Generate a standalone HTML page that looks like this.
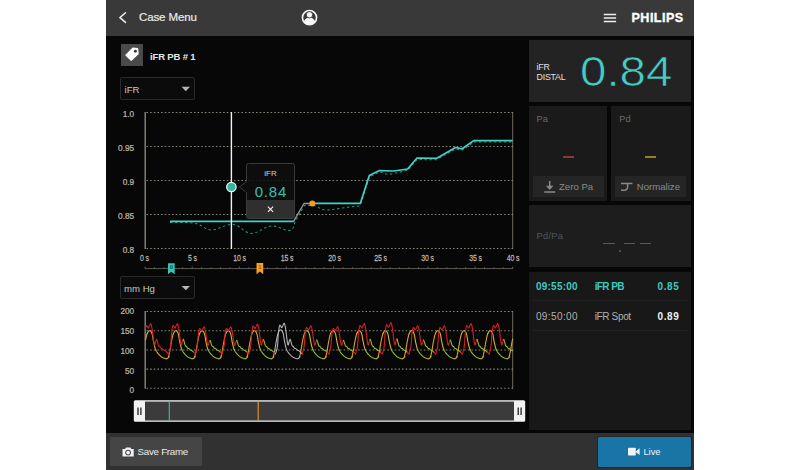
<!DOCTYPE html>
<html lang="en">
<head>
<meta charset="utf-8">
<title>iFR Pullback</title>
<style>
html,body{margin:0;padding:0;}
body{width:800px;height:470px;overflow:hidden;background:#fff;position:relative;font-family:"Liberation Sans",sans-serif;color:#e6e6e6;}
.abs{position:absolute;}
#app{left:106px;top:0;width:588px;height:470px;background:#070707;}
#hdr{left:106px;top:0;width:588px;height:36px;background:#393939;}
#ftr{left:106px;top:433px;width:588px;height:37px;background:#313131;}
.t{position:absolute;white-space:nowrap;line-height:1;}
.card{position:absolute;background:#222;}
.dd{position:absolute;box-sizing:border-box;border:1px solid #2a2a2a;border-radius:2px;background:#0b0b0b;}
svg{position:absolute;left:0;top:0;overflow:visible;}
.ax text{font-family:"Liberation Sans",sans-serif;font-size:9.2px;fill:#bdb6a8;stroke:#bdb6a8;stroke-width:0.25px;}
.xs text{word-spacing:-0.5px;font-size:9.1px;}
</style>
</head>
<body>
<div id="app" class="abs"></div>
<div id="hdr" class="abs"></div>
<div id="ftr" class="abs"></div>

<!-- header -->
<div class="t" style="left:139px;top:11.9px;font-size:11.5px;color:#eaeaea;letter-spacing:-0.12px;-webkit-text-stroke:0.2px #eaeaea;">Case Menu</div>
<div class="t" style="left:631.5px;top:12px;font-size:12.6px;font-weight:bold;color:#fff;letter-spacing:0.45px;-webkit-text-stroke:0.35px #fff;">PHILIPS</div>

<!-- title row -->
<div class="abs" style="left:121px;top:44px;width:21.5px;height:21.5px;background:#4a4a4a;"></div>
<div class="t" style="left:150px;top:52.3px;font-size:9.5px;font-weight:bold;color:#e8e8e8;letter-spacing:-0.15px;">iFR PB # 1</div>

<!-- dropdowns -->
<div class="dd" style="left:120px;top:77px;width:75px;height:23px;"></div>
<div class="t" style="left:124.5px;top:84.8px;font-size:9.6px;color:#c6c6c6;">iFR</div>
<div class="dd" style="left:120px;top:276px;width:75px;height:23px;"></div>
<div class="t" style="left:124px;top:283.8px;font-size:9.6px;color:#c6c6c6;">mm Hg</div>

<!-- right cards -->
<div class="card" style="left:528.7px;top:39.8px;width:162px;height:62px;background:#232323;"></div>
<div class="t" style="left:536.5px;top:62.7px;font-size:8.8px;color:#e0e0e0;letter-spacing:-0.2px;">iFR</div>
<div class="t" style="left:536.5px;top:72.8px;font-size:8.8px;color:#e0e0e0;letter-spacing:-0.2px;">DISTAL</div>
<div class="t" id="big" style="left:580px;top:51.2px;font-size:42.4px;color:#45cdc3;transform-origin:0 0;transform:scaleX(1.12);-webkit-text-stroke:0.7px #232323;">0.84</div>

<div class="card" style="left:528.7px;top:105.8px;width:78.8px;height:95px;background:#1a1a1a;"></div>
<div class="card" style="left:611.3px;top:105.8px;width:79.4px;height:95px;background:#1a1a1a;"></div>
<div class="t" style="left:536.5px;top:114.8px;font-size:9.2px;color:#6a6a6a;">Pa</div>
<div class="t" style="left:619.3px;top:114.8px;font-size:9.2px;color:#6a6a6a;">Pd</div>
<div class="abs" style="left:562.5px;top:156.3px;width:11px;height:1.6px;background:#8c3838;"></div>
<div class="abs" style="left:644.8px;top:156.3px;width:11.3px;height:1.6px;background:#94802a;"></div>
<div class="abs" style="left:532.6px;top:176px;width:71.3px;height:21.2px;background:#252525;"></div>
<div class="abs" style="left:614.7px;top:176px;width:71.3px;height:21.2px;background:#252525;"></div>
<div class="t" style="left:559px;top:181.8px;font-size:9.6px;color:#8a8a8a;">Zero Pa</div>
<div class="t" style="left:636.8px;top:181.8px;font-size:9.6px;color:#8a8a8a;">Normalize</div>

<div class="card" style="left:528.7px;top:205.2px;width:162px;height:62.2px;background:#1d1d1d;"></div>
<div class="t" style="left:536.5px;top:231.8px;font-size:9.2px;color:#555;letter-spacing:0.35px;">Pd/Pa</div>
<div class="abs" style="left:603.2px;top:242.9px;width:11.5px;height:1.4px;background:#5a5a5a;"></div>
<div class="abs" style="left:623.9px;top:242.9px;width:11.2px;height:1.4px;background:#5a5a5a;"></div>
<div class="abs" style="left:639.5px;top:242.9px;width:11.5px;height:1.4px;background:#5a5a5a;"></div>
<div class="abs" style="left:619px;top:250.2px;width:2px;height:2px;border-radius:1px;background:#5a5a5a;"></div>

<div class="card" style="left:528.7px;top:271.8px;width:162px;height:158.6px;background:#181818;"></div>
<div class="abs" style="left:532.6px;top:300.3px;width:154.8px;height:1px;background:#222;"></div>
<div class="abs" style="left:532.6px;top:330px;width:154.8px;height:1px;background:#222;"></div>
<div class="t" style="left:535.9px;top:281.7px;font-size:10px;font-weight:bold;color:#3ec9c1;letter-spacing:0.25px;">09:55:00</div>
<div class="t" style="left:594.7px;top:281.7px;font-size:10px;font-weight:bold;color:#3ec9c1;letter-spacing:-0.6px;">iFR PB</div>
<div class="t" style="left:657.6px;top:281.7px;font-size:10px;font-weight:bold;color:#3ec9c1;letter-spacing:0.55px;">0.85</div>
<div class="t" style="left:535.9px;top:311.6px;font-size:10px;color:#b0b0b0;letter-spacing:0.4px;">09:50:00</div>
<div class="t" style="left:594.7px;top:311.6px;font-size:10px;color:#b0b0b0;letter-spacing:-0.35px;">iFR Spot</div>
<div class="t" style="left:657.6px;top:311.6px;font-size:10px;font-weight:bold;color:#f0f0f0;letter-spacing:0.55px;">0.89</div>

<!-- footer buttons -->
<div class="abs" style="left:109.7px;top:437px;width:92px;height:28.7px;background:#454545;"></div>
<div class="t" style="left:137.6px;top:446.9px;font-size:9.8px;color:#eaeaea;letter-spacing:-0.3px;">Save Frame</div>
<div class="abs" style="left:598.2px;top:436.8px;width:92.4px;height:29.8px;background:#1a75a7;border-radius:1.5px;box-shadow:0 0 0 1px #262626;"></div>
<div class="t" style="left:643.4px;top:447px;font-size:9.4px;color:#f2f2f2;">Live</div>

<svg width="800" height="470" viewBox="0 0 800 470">
  <!-- header icons -->
  <path d="M125.5 12.8L119.9 17.6L125.5 22.4" stroke="#f0f0f0" stroke-width="1.5" fill="none" stroke-linecap="round" stroke-linejoin="round"/>
  <g>
    <clipPath id="uc"><circle cx="309.5" cy="17.6" r="7.3"/></clipPath>
    <circle cx="309.5" cy="17.6" r="7.1" fill="none" stroke="#f6f6f6" stroke-width="1.6"/>
    <ellipse cx="309.5" cy="25.4" rx="6.6" ry="8" fill="#f6f6f6" clip-path="url(#uc)"/>
    <circle cx="309.5" cy="14.8" r="3.2" fill="#f6f6f6" stroke="#393939" stroke-width="0.9"/>
  </g>
  <path d="M603.8 14.6h12.3M603.8 18h12.3M603.8 21.4h12.3" stroke="#f0f0f0" stroke-width="1.5" fill="none"/>
  <!-- tag icon -->
  <path d="M137.6 48.6l.5 5.3-6.9 6.5-5.3-5.3 6.9-6.9z" fill="#fff" stroke="#fff" stroke-width="1.2" stroke-linejoin="round"/>
  <circle cx="135.4" cy="51.2" r="1.45" fill="#333"/>
  <!-- dropdown arrows -->
  <path d="M181.6 86.8h8.4l-4.2 4.4z" fill="#b6b6b6"/>
  <path d="M181.6 285.9h8.4l-4.2 4.4z" fill="#b6b6b6"/>

  <!-- chart 1 -->
  <g class="ax">
    <text transform="translate(134.2 117.2) scale(0.90 1)" text-anchor="end">1.0</text>
<text transform="translate(134.2 151.2) scale(0.90 1)" text-anchor="end">0.95</text>
<text transform="translate(134.2 185.2) scale(0.90 1)" text-anchor="end">0.9</text>
<text transform="translate(134.2 219.2) scale(0.90 1)" text-anchor="end">0.85</text>
<text transform="translate(134.2 253.2) scale(0.90 1)" text-anchor="end">0.8</text>
    <text transform="translate(134.2 314.4) scale(0.90 1)" text-anchor="end">200</text>
<text transform="translate(134.2 334.1) scale(0.90 1)" text-anchor="end">150</text>
<text transform="translate(134.2 353.8) scale(0.90 1)" text-anchor="end">100</text>
<text transform="translate(134.2 373.5) scale(0.90 1)" text-anchor="end">50</text>
<text transform="translate(134.2 393.2) scale(0.90 1)" text-anchor="end">0</text>
  </g>
  <g class="ax xs">
    <text transform="translate(144.5 260.6) scale(0.76 1)" text-anchor="middle">0 s</text>
<text transform="translate(192.5 260.6) scale(0.76 1)" text-anchor="middle">5 s</text>
<text transform="translate(239.5 260.6) scale(0.76 1)" text-anchor="middle">10 s</text>
<text transform="translate(287.0 260.6) scale(0.76 1)" text-anchor="middle">15 s</text>
<text transform="translate(334.5 260.6) scale(0.76 1)" text-anchor="middle">20 s</text>
<text transform="translate(380.5 260.6) scale(0.76 1)" text-anchor="middle">25 s</text>
<text transform="translate(427.5 260.6) scale(0.76 1)" text-anchor="middle">30 s</text>
<text transform="translate(475.5 260.6) scale(0.76 1)" text-anchor="middle">35 s</text>
<text transform="translate(513.0 260.6) scale(0.76 1)" text-anchor="middle">40 s</text>
  </g>
  <path d="M146.5 112.5H513 M146.5 146.5H513 M146.5 180.5H513 M146.5 214.5H513 M146.5 248.5H513" stroke="#8c867b" stroke-width="1.05" stroke-dasharray="1.55 2.1" fill="none"/>
  <path d="M146.5 311.5H513 M146.5 330.7H513 M146.5 349.9H513 M146.5 369.1H513 M146.5 388.3H513" stroke="#8c867b" stroke-width="1.05" stroke-dasharray="1.55 2.1" fill="none"/>
  <path d="M145.2 112V249M145.2 311V388.8" stroke="#8c877d" stroke-width="1.4" fill="none"/>
  <path d="M512.7 112V249M512.7 311V388.8" stroke="#8a8478" stroke-width="0.8" fill="none"/>
  <path d="M145 268.6H512.6 M145.0 268.6v-2.1 M154.4 268.6v-1.4 M163.9 268.6v-1.4 M173.3 268.6v-1.4 M182.7 268.6v-1.4 M192.2 268.6v-2.1 M201.6 268.6v-1.4 M211.0 268.6v-1.4 M220.4 268.6v-1.4 M229.9 268.6v-1.4 M239.3 268.6v-2.1 M248.7 268.6v-1.4 M258.2 268.6v-1.4 M267.6 268.6v-1.4 M277.0 268.6v-1.4 M286.4 268.6v-2.1 M295.9 268.6v-1.4 M305.3 268.6v-1.4 M314.7 268.6v-1.4 M324.2 268.6v-1.4 M333.6 268.6v-2.1 M343.0 268.6v-1.4 M352.5 268.6v-1.4 M361.9 268.6v-1.4 M371.3 268.6v-1.4 M380.8 268.6v-2.1 M390.2 268.6v-1.4 M399.6 268.6v-1.4 M409.0 268.6v-1.4 M418.5 268.6v-1.4 M427.9 268.6v-2.1 M437.3 268.6v-1.4 M446.8 268.6v-1.4 M456.2 268.6v-1.4 M465.6 268.6v-1.4 M475.1 268.6v-2.1 M484.5 268.6v-1.4 M493.9 268.6v-1.4 M503.3 268.6v-1.4 M512.8 268.6v-1.4 M512.6 268.6v-1.8" stroke="#66625b" stroke-width="0.9" fill="none"/>

  <!-- iFR dotted curve -->
  <path d="M170 222.4C180 222.6 190 222.3 196 223.5C202 225 206 230 211.5 230C218 230 224 224.4 232.5 224.4C240 224.4 244 233.4 251.5 233.4C259 233.4 264 226 272 226C279 226 284 231 290.5 230.4C293 230 293.8 226 295 222L304.4 205.5H314C318 206 320 210.2 327 210C335 209.8 345 207 358.5 206.2L360.6 204.5L369.5 177L379.5 172C383 172.5 385 174.3 388.5 174.2C394 174 400 172 405 170.8L407.8 170.4L417 159.5L436.5 159.8L455.5 149L462.2 150.2L473.8 142H512.5" stroke="#1a9a80" stroke-width="1.05" stroke-dasharray="2.4 2.6" fill="none"/>
  <!-- grey connector -->
  <path d="M293.6 221.4L304 203.5H312" stroke="#9a9a9a" stroke-width="1.3" fill="none" stroke-linejoin="round"/>
  <!-- iFR solid curve -->
  <path d="M170 221.4H293.8" stroke="#43d1ca" stroke-width="1.7" fill="none"/>
  <path d="M312.4 203.4H360.3L369.3 175.4L379.4 170.6L393.8 171L407.6 169L417 158L436.4 158.4L455.5 147.5L462.2 148.8L473.7 140.6H512.6" stroke="#43d1ca" stroke-width="1.7" fill="none" stroke-linejoin="round"/>
  <circle cx="312.3" cy="203.4" r="3" fill="#f59a23"/>

  <!-- cursor -->
  <path d="M231.4 112V249" stroke="#f2f2f2" stroke-width="1.4"/>
  <circle cx="231.4" cy="187" r="4.7" fill="#2fb89b" stroke="#f4f4f4" stroke-width="1.3"/>

  <!-- bookmarks -->
  <path d="M168 263.3h6.7v11l-3.35-2.6-3.35 2.6z" fill="#35c6b4"/>
  <path d="M256.5 263h6.7v11.2l-3.35-2.6-3.35 2.6z" fill="#f5a21f"/>

  <!-- waveforms -->
  <g fill="none" stroke-width="1.1" stroke-linejoin="round" stroke-linecap="round">
  <path d="M145.6 340.0 L145.8 339.0 L146.1 337.4 L146.5 336.0 L146.8 334.7 L147.2 333.6" stroke="#dfa326"/>
<path d="M147.2 333.6 L147.6 332.7 L148.0 332.0 L148.4 331.4 L148.8 331.0 L149.2 330.8 L149.6 330.7 L150.0 330.8 L150.4 331.0 L150.8 331.4 L151.3 332.0 L151.6 332.7 L152.0 333.6 L152.3 334.7 L152.6 336.0 L152.8 337.5 L153.1 339.1 L153.3 340.6 L153.6 342.0 L153.9 343.4 L154.2 344.7 L154.5 346.1 L154.9 347.3 L155.2 348.5 L155.6 349.6" stroke="#d9b62a"/>
<path d="M155.6 349.6 L156.0 350.5 L156.4 351.3 L156.9 352.0 L157.4 352.7 L157.9 353.3 L158.4 353.9 L159.0 354.5 L159.6 355.2 L160.3 355.8 L160.9 356.3 L161.6 356.9 L162.3 357.3 L163.0 357.7 L163.8 358.0 L164.5 358.3 L165.3 358.6 L166.0 358.7 L166.6 358.7" stroke="#d9b62a"/>
<path d="M166.6 358.7 L167.1 358.6 L167.6 358.2 L168.1 357.8 L168.5 357.4 L168.8 357.0 L169.0 356.8 L169.1 356.7 L169.0 356.7 L168.9 356.7 L168.8 356.7 L168.6 356.8 L168.5 356.8" stroke="#dfa326"/>
<path d="M168.5 356.8 L168.7 356.2 L168.9 355.3 L169.2 354.2 L169.4 353.1 L169.7 351.8 L169.9 350.6 L170.2 349.3 L170.4 347.9 L170.6 346.4 L170.9 344.9 L171.1 343.4 L171.4 342.0 L171.7 340.5 L172.0 339.0 L172.3 337.4 L172.7 336.0 L173.0 334.7 L173.4 333.6" stroke="#dfa326"/>
<path d="M173.4 333.6 L173.8 332.7 L174.2 332.0 L174.6 331.4 L175.0 331.0 L175.4 330.8 L175.8 330.7 L176.2 330.8 L176.6 331.0 L177.1 331.4 L177.5 332.0 L177.8 332.7 L178.2 333.6 L178.5 334.7 L178.8 336.0 L179.0 337.5 L179.3 339.1 L179.5 340.6 L179.8 342.0 L180.1 343.4 L180.4 344.7 L180.7 346.1 L181.1 347.3 L181.4 348.5 L181.8 349.6" stroke="#d9b62a"/>
<path d="M181.8 349.6 L182.2 350.5 L182.6 351.3 L183.1 352.0 L183.6 352.7 L184.1 353.3 L184.6 353.9 L185.2 354.5 L185.8 355.2 L186.5 355.8 L187.1 356.3 L187.8 356.9 L188.5 357.3 L189.2 357.7 L190.0 358.0 L190.7 358.3 L191.5 358.6 L192.2 358.7 L192.8 358.7" stroke="#8fc232"/>
<path d="M192.8 358.7 L193.3 358.6 L193.8 358.2 L194.3 357.8 L194.7 357.4 L195.0 357.0 L195.2 356.8 L195.3 356.7 L195.2 356.7 L195.1 356.7 L195.0 356.7 L194.8 356.8 L194.7 356.8" stroke="#dfa326"/>
<path d="M194.8 356.8 L194.9 356.2 L195.1 355.3 L195.4 354.2 L195.6 353.1 L195.9 351.8 L196.2 350.6 L196.4 349.3 L196.6 347.9 L196.8 346.4 L197.1 344.9 L197.3 343.4 L197.6 342.0 L197.9 340.5 L198.2 339.0 L198.5 337.4 L198.9 336.0 L199.2 334.7 L199.6 333.6" stroke="#dfa326"/>
<path d="M199.6 333.6 L200.0 332.7 L200.4 332.0 L200.8 331.4 L201.2 331.0 L201.6 330.8 L202.0 330.7 L202.4 330.8 L202.8 331.0 L203.2 331.4 L203.7 332.0 L204.0 332.7 L204.4 333.6 L204.7 334.7 L205.0 336.0 L205.2 337.5 L205.5 339.1 L205.7 340.6 L206.0 342.0 L206.3 343.4 L206.6 344.7 L206.9 346.1 L207.3 347.3 L207.6 348.5 L208.0 349.6" stroke="#d9b62a"/>
<path d="M208.0 349.6 L208.4 350.5 L208.8 351.3 L209.3 352.0 L209.8 352.7 L210.3 353.3 L210.8 353.9 L211.4 354.5 L212.0 355.2 L212.7 355.8 L213.3 356.3 L214.0 356.9 L214.7 357.3 L215.4 357.7 L216.2 358.0 L216.9 358.3 L217.7 358.6 L218.4 358.7 L219.0 358.7" stroke="#8fc232"/>
<path d="M219.0 358.7 L219.5 358.6 L220.0 358.2 L220.5 357.8 L220.9 357.4 L221.2 357.0 L221.4 356.8 L221.5 356.7 L221.4 356.7 L221.3 356.7 L221.2 356.7 L221.0 356.8 L220.9 356.8" stroke="#dfa326"/>
<path d="M220.9 356.8 L221.1 356.2 L221.3 355.3 L221.6 354.2 L221.8 353.1 L222.1 351.8 L222.3 350.6 L222.6 349.3 L222.8 347.9 L223.0 346.4 L223.3 344.9 L223.5 343.4 L223.8 342.0 L224.1 340.5 L224.4 339.0 L224.7 337.4 L225.1 336.0 L225.4 334.7 L225.8 333.6" stroke="#dfa326"/>
<path d="M225.8 333.6 L226.2 332.7 L226.6 332.0 L227.0 331.4 L227.4 331.0 L227.8 330.8 L228.2 330.7 L228.6 330.8 L229.0 331.0 L229.4 331.4 L229.9 332.0 L230.2 332.7 L230.6 333.6 L230.9 334.7 L231.2 336.0 L231.4 337.5 L231.7 339.1 L231.9 340.6 L232.2 342.0 L232.5 343.4 L232.8 344.7 L233.1 346.1 L233.5 347.3 L233.8 348.5 L234.2 349.6" stroke="#d9b62a"/>
<path d="M234.2 349.6 L234.6 350.5 L235.0 351.3 L235.5 352.0 L236.0 352.7 L236.5 353.3 L237.0 353.9 L237.6 354.5 L238.2 355.2 L238.9 355.8 L239.5 356.3 L240.2 356.9 L240.9 357.3 L241.6 357.7 L242.4 358.0 L243.1 358.3 L243.9 358.6 L244.6 358.7 L245.2 358.7" stroke="#8fc232"/>
<path d="M245.2 358.7 L245.7 358.6 L246.2 358.2 L246.7 357.8 L247.1 357.4 L247.4 357.0 L247.6 356.8 L247.7 356.7 L247.6 356.7 L247.5 356.7 L247.4 356.7 L247.2 356.8 L247.2 356.8" stroke="#dfa326"/>
<path d="M247.2 356.8 L247.3 356.2 L247.5 355.3 L247.8 354.2 L248.0 353.1 L248.3 351.8 L248.6 350.6 L248.8 349.3 L249.0 347.9 L249.2 346.4 L249.5 344.9 L249.7 343.4 L250.0 342.0 L250.3 340.5 L250.6 339.0 L250.9 337.4 L251.3 336.0 L251.6 334.7 L252.0 333.6" stroke="#dfa326"/>
<path d="M252.0 333.6 L252.4 332.7 L252.8 332.0 L253.2 331.4 L253.6 331.0 L254.0 330.8 L254.4 330.7 L254.8 330.8 L255.2 331.0 L255.7 331.4 L256.1 332.0 L256.4 332.7 L256.8 333.6 L257.1 334.7 L257.4 336.0 L257.6 337.5 L257.9 339.1 L258.1 340.6 L258.4 342.0 L258.7 343.4 L259.0 344.7 L259.3 346.1 L259.7 347.3 L260.0 348.5 L260.4 349.6" stroke="#d9b62a"/>
<path d="M260.4 349.6 L260.8 350.5 L261.2 351.3 L261.7 352.0 L262.2 352.7 L262.7 353.3 L263.2 353.9 L263.8 354.5 L264.4 355.2 L265.1 355.8 L265.7 356.3 L266.4 356.9 L267.1 357.3 L267.8 357.7 L268.6 358.0 L269.3 358.3 L270.1 358.6 L270.8 358.7 L271.4 358.7" stroke="#8fc232"/>
<path d="M271.4 358.7 L271.9 358.6 L272.4 358.2 L272.9 357.8 L273.3 357.4 L273.6 357.0 L273.8 356.8 L273.9 356.7 L273.8 356.7 L273.7 356.7 L273.6 356.7 L273.4 356.8 L273.3 356.8" stroke="#dfa326"/>
<path d="M273.3 356.8 L273.5 356.2 L273.7 355.3 L274.0 354.3 L274.2 353.1 L274.5 351.9 L274.8 350.6 L275.0 349.3 L275.2 347.8 L275.4 346.3 L275.7 344.8 L275.9 343.2 L276.2 341.7 L276.5 340.2 L276.8 338.6 L277.1 337.0 L277.5 335.4 L277.8 334.1 L278.2 332.9 L278.6 332.0 L279.0 331.3 L279.4 330.7 L279.8 330.2 L280.2 330.0 L280.6 329.9 L281.0 330.0 L281.4 330.2 L281.8 330.7 L282.3 331.3 L282.6 332.0 L283.0 332.9 L283.3 334.1 L283.6 335.5 L283.8 337.0 L284.1 338.7 L284.3 340.3 L284.6 341.7 L284.9 343.2 L285.2 344.6 L285.5 346.0 L285.9 347.3 L286.2 348.5 L286.6 349.6 L287.0 350.5 L287.4 351.3 L287.9 352.0 L288.4 352.7 L288.9 353.3 L289.4 353.9 L290.0 354.5 L290.6 355.2 L291.3 355.8 L291.9 356.3 L292.6 356.9 L293.3 357.3 L294.0 357.7 L294.8 358.0 L295.5 358.3 L296.3 358.6 L297.0 358.7 L297.6 358.7 L298.1 358.6 L298.6 358.2 L299.1 357.8 L299.5 357.4 L299.8 357.0 L300.0 356.8 L300.1 356.7 L300.0 356.7 L299.9 356.7 L299.8 356.7 L299.6 356.8 L299.5 356.8" stroke="#b2b2b2"/>
<path d="M299.5 356.8 L299.7 356.2 L299.9 355.3 L300.2 354.2 L300.4 353.1 L300.7 351.8 L300.9 350.6 L301.2 349.3 L301.4 347.9 L301.6 346.4 L301.9 344.9 L302.1 343.4 L302.4 342.0 L302.7 340.5 L303.0 339.0 L303.3 337.4 L303.7 336.0 L304.0 334.7 L304.4 333.6" stroke="#dfa326"/>
<path d="M304.4 333.6 L304.8 332.7 L305.2 332.0 L305.6 331.4 L306.0 331.0 L306.4 330.8 L306.8 330.7 L307.2 330.8 L307.6 331.0 L308.0 331.4 L308.5 332.0 L308.8 332.7 L309.2 333.6 L309.5 334.7 L309.8 336.0 L310.0 337.5 L310.3 339.1 L310.5 340.6 L310.8 342.0 L311.1 343.4 L311.4 344.7 L311.7 346.1 L312.1 347.3 L312.4 348.5 L312.8 349.6" stroke="#d9b62a"/>
<path d="M312.8 349.6 L313.2 350.5 L313.6 351.3 L314.1 352.0 L314.6 352.7 L315.1 353.3 L315.6 353.9 L316.2 354.5 L316.8 355.2 L317.5 355.8 L318.1 356.3 L318.8 356.9 L319.5 357.3 L320.2 357.7 L321.0 358.0 L321.7 358.3 L322.5 358.6 L323.2 358.7 L323.8 358.7" stroke="#8fc232"/>
<path d="M323.8 358.7 L324.3 358.6 L324.8 358.2 L325.3 357.8 L325.7 357.4 L326.0 357.0 L326.2 356.8 L326.3 356.7 L326.2 356.7 L326.1 356.7 L326.0 356.7 L325.8 356.8 L325.7 356.8" stroke="#dfa326"/>
<path d="M325.8 356.8 L325.9 356.2 L326.1 355.3 L326.4 354.2 L326.6 353.1 L326.9 351.8 L327.2 350.6 L327.4 349.3 L327.6 347.9 L327.8 346.4 L328.1 344.9 L328.3 343.4 L328.6 342.0 L328.9 340.5 L329.2 339.0 L329.5 337.4 L329.9 336.0 L330.2 334.7 L330.6 333.6" stroke="#dfa326"/>
<path d="M330.6 333.6 L331.0 332.7 L331.4 332.0 L331.8 331.4 L332.2 331.0 L332.6 330.8 L333.0 330.7 L333.4 330.8 L333.8 331.0 L334.2 331.4 L334.7 332.0 L335.0 332.7 L335.4 333.6 L335.7 334.7 L336.0 336.0 L336.2 337.5 L336.5 339.1 L336.7 340.6 L337.0 342.0 L337.3 343.4 L337.6 344.7 L337.9 346.1 L338.3 347.3 L338.6 348.5 L339.0 349.6" stroke="#d9b62a"/>
<path d="M339.0 349.6 L339.4 350.5 L339.8 351.3 L340.3 352.0 L340.8 352.7 L341.3 353.3 L341.8 353.9 L342.4 354.5 L343.0 355.2 L343.7 355.8 L344.3 356.3 L345.0 356.9 L345.7 357.3 L346.4 357.7 L347.2 358.0 L347.9 358.3 L348.7 358.6 L349.4 358.7 L350.0 358.7" stroke="#8fc232"/>
<path d="M350.0 358.7 L350.5 358.6 L351.0 358.2 L351.5 357.8 L351.9 357.4 L352.2 357.0 L352.4 356.8 L352.5 356.7 L352.4 356.7 L352.3 356.7 L352.2 356.7 L352.0 356.8 L351.9 356.8" stroke="#dfa326"/>
<path d="M351.9 356.8 L352.1 356.2 L352.3 355.3 L352.6 354.2 L352.8 353.1 L353.1 351.8 L353.3 350.6 L353.6 349.3 L353.8 347.9 L354.0 346.4 L354.3 344.9 L354.5 343.4 L354.8 342.0 L355.1 340.5 L355.4 339.0 L355.7 337.4 L356.1 336.0 L356.4 334.7 L356.8 333.6" stroke="#dfa326"/>
<path d="M356.8 333.6 L357.2 332.7 L357.6 332.0 L358.0 331.4 L358.4 331.0 L358.8 330.8 L359.2 330.7 L359.6 330.8 L360.0 331.0 L360.4 331.4 L360.9 332.0 L361.2 332.7 L361.6 333.6 L361.9 334.7 L362.2 336.0 L362.4 337.5 L362.7 339.1 L362.9 340.6 L363.2 342.0 L363.5 343.4 L363.8 344.7 L364.1 346.1 L364.5 347.3 L364.8 348.5 L365.2 349.6" stroke="#d9b62a"/>
<path d="M365.2 349.6 L365.6 350.5 L366.0 351.3 L366.5 352.0 L367.0 352.7 L367.5 353.3 L368.0 353.9 L368.6 354.5 L369.2 355.2 L369.9 355.8 L370.5 356.3 L371.2 356.9 L371.9 357.3 L372.6 357.7 L373.4 358.0 L374.1 358.3 L374.9 358.6 L375.6 358.7 L376.2 358.7" stroke="#8fc232"/>
<path d="M376.2 358.7 L376.7 358.6 L377.2 358.2 L377.7 357.8 L378.1 357.4 L378.4 357.0 L378.6 356.8 L378.7 356.7 L378.6 356.7 L378.5 356.7 L378.4 356.7 L378.2 356.8 L378.1 356.8" stroke="#dfa326"/>
<path d="M378.1 356.8 L378.3 356.2 L378.5 355.3 L378.8 354.2 L379.0 353.1 L379.3 351.8 L379.6 350.6 L379.8 349.3 L380.0 347.9 L380.2 346.4 L380.5 344.9 L380.7 343.4 L381.0 342.0 L381.3 340.5 L381.6 339.0 L381.9 337.4 L382.3 336.0 L382.6 334.7 L383.0 333.6" stroke="#dfa326"/>
<path d="M383.0 333.6 L383.4 332.7 L383.8 332.0 L384.2 331.4 L384.6 331.0 L385.0 330.8 L385.4 330.7 L385.8 330.8 L386.2 331.0 L386.6 331.4 L387.1 332.0 L387.4 332.7 L387.8 333.6 L388.1 334.7 L388.4 336.0 L388.6 337.5 L388.9 339.1 L389.1 340.6 L389.4 342.0 L389.7 343.4 L390.0 344.7 L390.3 346.1 L390.7 347.3 L391.0 348.5 L391.4 349.6" stroke="#d9b62a"/>
<path d="M391.4 349.6 L391.8 350.5 L392.2 351.3 L392.7 352.0 L393.2 352.7 L393.7 353.3 L394.2 353.9 L394.8 354.5 L395.4 355.2 L396.1 355.8 L396.7 356.3 L397.4 356.9 L398.1 357.3 L398.8 357.7 L399.6 358.0 L400.3 358.3 L401.1 358.6 L401.8 358.7 L402.4 358.7" stroke="#8fc232"/>
<path d="M402.4 358.7 L402.9 358.6 L403.4 358.2 L403.9 357.8 L404.3 357.4 L404.6 357.0 L404.8 356.8 L404.9 356.7 L404.8 356.7 L404.7 356.7 L404.6 356.7 L404.4 356.8 L404.3 356.8" stroke="#dfa326"/>
<path d="M404.3 356.8 L404.5 356.2 L404.7 355.3 L405.0 354.2 L405.2 353.1 L405.5 351.8 L405.8 350.6 L406.0 349.3 L406.2 347.9 L406.4 346.4 L406.7 344.9 L406.9 343.4 L407.2 342.0 L407.5 340.5 L407.8 339.0 L408.1 337.4 L408.5 336.0 L408.8 334.7 L409.2 333.6" stroke="#dfa326"/>
<path d="M409.2 333.6 L409.6 332.7 L410.0 332.0 L410.4 331.4 L410.8 331.0 L411.2 330.8 L411.6 330.7 L412.0 330.8 L412.4 331.0 L412.8 331.4 L413.3 332.0 L413.6 332.7 L414.0 333.6 L414.3 334.7 L414.6 336.0 L414.8 337.5 L415.1 339.1 L415.3 340.6 L415.6 342.0 L415.9 343.4 L416.2 344.7 L416.5 346.1 L416.9 347.3 L417.2 348.5 L417.6 349.6" stroke="#d9b62a"/>
<path d="M417.6 349.6 L418.0 350.5 L418.4 351.3 L418.9 352.0 L419.4 352.7 L419.9 353.3 L420.4 353.9 L421.0 354.5 L421.6 355.2 L422.3 355.8 L422.9 356.3 L423.6 356.9 L424.3 357.3 L425.0 357.7 L425.8 358.0 L426.5 358.3 L427.3 358.6 L428.0 358.7 L428.6 358.7" stroke="#8fc232"/>
<path d="M428.6 358.7 L429.1 358.6 L429.6 358.2 L430.1 357.8 L430.5 357.4 L430.8 357.0 L431.0 356.8 L431.1 356.7 L431.0 356.7 L430.9 356.7 L430.8 356.7 L430.6 356.8 L430.5 356.8" stroke="#dfa326"/>
<path d="M430.5 356.8 L430.7 356.2 L430.9 355.3 L431.2 354.2 L431.4 353.1 L431.7 351.8 L431.9 350.6 L432.2 349.3 L432.4 347.9 L432.6 346.4 L432.9 344.9 L433.1 343.4 L433.4 342.0 L433.7 340.5 L434.0 339.0 L434.3 337.4 L434.7 336.0 L435.0 334.7 L435.4 333.6" stroke="#dfa326"/>
<path d="M435.4 333.6 L435.8 332.7 L436.2 332.0 L436.6 331.4 L437.0 331.0 L437.4 330.8 L437.8 330.7 L438.2 330.8 L438.6 331.0 L439.0 331.4 L439.5 332.0 L439.8 332.7 L440.2 333.6 L440.5 334.7 L440.8 336.0 L441.0 337.5 L441.3 339.1 L441.5 340.6 L441.8 342.0 L442.1 343.4 L442.4 344.7 L442.7 346.1 L443.1 347.3 L443.4 348.5 L443.8 349.6" stroke="#d9b62a"/>
<path d="M443.8 349.6 L444.2 350.5 L444.6 351.3 L445.1 352.0 L445.6 352.7 L446.1 353.3 L446.6 353.9 L447.2 354.5 L447.8 355.2 L448.5 355.8 L449.1 356.3 L449.8 356.9 L450.5 357.3 L451.2 357.7 L452.0 358.0 L452.7 358.3 L453.5 358.6 L454.2 358.7 L454.8 358.7" stroke="#8fc232"/>
<path d="M454.8 358.7 L455.3 358.6 L455.8 358.2 L456.3 357.8 L456.7 357.4 L457.0 357.0 L457.2 356.8 L457.3 356.7 L457.2 356.7 L457.1 356.7 L457.0 356.7 L456.8 356.8 L456.7 356.8" stroke="#dfa326"/>
<path d="M456.7 356.8 L456.9 356.2 L457.1 355.3 L457.4 354.2 L457.6 353.1 L457.9 351.8 L458.1 350.6 L458.4 349.3 L458.6 347.9 L458.8 346.4 L459.1 344.9 L459.3 343.4 L459.6 342.0 L459.9 340.5 L460.2 339.0 L460.5 337.4 L460.9 336.0 L461.2 334.7 L461.6 333.6" stroke="#dfa326"/>
<path d="M461.6 333.6 L462.0 332.7 L462.4 332.0 L462.8 331.4 L463.2 331.0 L463.6 330.8 L464.0 330.7 L464.4 330.8 L464.8 331.0 L465.2 331.4 L465.7 332.0 L466.0 332.7 L466.4 333.6 L466.7 334.7 L467.0 336.0 L467.2 337.5 L467.5 339.1 L467.7 340.6 L468.0 342.0 L468.3 343.4 L468.6 344.7 L468.9 346.1 L469.3 347.3 L469.6 348.5 L470.0 349.6" stroke="#d9b62a"/>
<path d="M470.0 349.6 L470.4 350.5 L470.8 351.3 L471.3 352.0 L471.8 352.7 L472.3 353.3 L472.8 353.9 L473.4 354.5 L474.0 355.2 L474.7 355.8 L475.3 356.3 L476.0 356.9 L476.7 357.3 L477.4 357.7 L478.2 358.0 L478.9 358.3 L479.7 358.6 L480.4 358.7 L481.0 358.7" stroke="#8fc232"/>
<path d="M481.0 358.7 L481.5 358.6 L482.0 358.2 L482.5 357.8 L482.9 357.4 L483.2 357.0 L483.4 356.8 L483.5 356.7 L483.4 356.7 L483.3 356.7 L483.2 356.7 L483.0 356.8 L482.9 356.8" stroke="#dfa326"/>
<path d="M482.9 356.8 L483.1 356.2 L483.3 355.3 L483.6 354.2 L483.8 353.1 L484.1 351.8 L484.3 350.6 L484.6 349.3 L484.8 347.9 L485.0 346.4 L485.3 344.9 L485.5 343.4 L485.8 342.0 L486.1 340.5 L486.4 339.0 L486.7 337.4 L487.1 336.0 L487.4 334.7 L487.8 333.6" stroke="#dfa326"/>
<path d="M487.8 333.6 L488.2 332.7 L488.6 332.0 L489.0 331.4 L489.4 331.0 L489.8 330.8 L490.2 330.7 L490.6 330.8 L491.0 331.0 L491.4 331.4 L491.9 332.0 L492.2 332.7 L492.6 333.6 L492.9 334.7 L493.2 336.0 L493.4 337.5 L493.7 339.1 L493.9 340.6 L494.2 342.0 L494.5 343.4 L494.8 344.7 L495.1 346.1 L495.5 347.3 L495.8 348.5 L496.2 349.6" stroke="#d9b62a"/>
<path d="M496.2 349.6 L496.6 350.5 L497.0 351.3 L497.5 352.0 L498.0 352.7 L498.5 353.3 L499.0 353.9 L499.6 354.5 L500.2 355.2 L500.9 355.8 L501.5 356.3 L502.2 356.9 L502.9 357.3 L503.6 357.7 L504.4 358.0 L505.1 358.3 L505.9 358.6 L506.6 358.7 L507.2 358.7" stroke="#8fc232"/>
<path d="M507.2 358.7 L507.7 358.6 L508.2 358.2 L508.7 357.8 L509.1 357.4 L509.4 357.0 L509.6 356.8 L509.7 356.7 L509.6 356.7 L509.5 356.7 L509.4 356.7 L509.2 356.8 L509.1 356.8" stroke="#dfa326"/>
<path d="M509.1 356.8 L509.3 356.2 L509.5 355.3 L509.8 354.2 L510.0 353.1 L510.3 351.8 L510.6 350.6 L510.8 349.3 L511.0 347.9 L511.2 346.4 L511.5 344.9 L511.7 343.4 L512.0 342.0 L512.3 340.5 L512.6 339.0" stroke="#dfa326"/>
<path d="M145.6 328.1 L145.7 327.6 L145.9 326.7 L146.1 326.0 L146.3 325.6 L146.5 325.6 L146.7 325.8 L146.9 326.1 L147.1 326.4 L147.3 326.7 L147.5 326.9 L147.6 327.3 L147.8 327.6 L147.9 327.9 L148.1 328.1 L148.3 328.1 L148.5 327.8 L148.7 327.4 L149.0 326.9 L149.2 326.3 L149.5 325.7 L149.7 325.3 L149.9 324.9 L150.1 324.5 L150.3 324.1 L150.5 323.8 L150.7 323.7 L150.9 323.9 L151.1 324.4 L151.3 325.1 L151.5 326.0 L151.7 327.1 L152.0 328.3 L152.2 329.7 L152.4 331.4 L152.7 333.4 L153.0 335.6 L153.2 337.8 L153.5 339.8 L153.7 341.3 L153.9 342.5 L154.1 343.4 L154.2 344.1 L154.4 344.6 L154.5 344.9 L154.7 345.0 L154.9 344.9 L155.0 344.4 L155.1 343.8 L155.3 343.1 L155.4 342.4 L155.6 341.9 L155.8 341.4 L155.9 340.8 L156.1 340.3 L156.3 339.9 L156.4 339.6 L156.6 339.4" stroke="#d31f26"/>
<path d="M156.6 339.4 L156.8 339.6 L156.9 339.8 L157.0 340.3 L157.2 340.8 L157.3 341.3 L157.5 341.9 L157.7 342.5 L157.8 343.1 L158.0 343.8 L158.2 344.5 L158.4 345.1 L158.6 345.6 L158.8 345.9 L159.0 346.1 L159.2 346.2 L159.5 346.3 L159.7 346.5 L159.9 346.6 L160.1 346.9 L160.3 347.2 L160.5 347.5 L160.6 347.7 L160.8 348.0 L161.0 348.2 L161.2 348.3 L161.4 348.4 L161.6 348.5 L161.8 348.5 L162.1 348.6 L162.3 348.7 L162.5 348.9 L162.8 349.1 L163.0 349.4 L163.3 349.7 L163.5 349.9 L163.8 350.1 L164.1 350.2 L164.3 350.3 L164.6 350.4 L164.8 350.5 L165.1 350.6 L165.3 350.7 L165.5 350.9 L165.8 351.1 L166.0 351.3 L166.2 351.5 L166.4 351.7 L166.7 352.0" stroke="#d31f26"/>
<path d="M166.7 352.0 L167.0 352.3 L167.4 352.7 L167.7 353.0 L168.1 353.4 L168.4 353.7 L168.6 353.9 L168.7 354.0 L168.8 354.0 L168.7 354.0 L168.7 354.0 L168.7 353.9 L168.7 353.9" stroke="#d31f26"/>
<path d="M168.7 353.9 L168.9 353.2 L169.2 352.2 L169.5 351.1 L169.9 349.8 L170.3 348.3 L170.5 346.6 L170.8 344.7 L171.0 342.4 L171.1 339.9 L171.3 337.4 L171.4 335.1 L171.6 333.2 L171.8 331.5 L172.0 330.0 L172.2 328.7 L172.4 327.6 L172.6 326.7 L172.8 326.0 L173.0 325.6 L173.2 325.6 L173.4 325.8 L173.6 326.1 L173.8 326.4 L174.0 326.7 L174.2 326.9 L174.3 327.3 L174.5 327.6 L174.6 327.9 L174.8 328.1 L175.0 328.1 L175.2 327.8 L175.4 327.4 L175.7 326.9 L175.9 326.3 L176.2 325.7 L176.4 325.3 L176.6 324.9 L176.8 324.5 L177.0 324.1 L177.2 323.8 L177.4 323.7 L177.6 323.9 L177.8 324.4 L178.0 325.1 L178.2 326.0 L178.4 327.1 L178.7 328.3 L178.9 329.7 L179.1 331.4 L179.4 333.4 L179.7 335.6 L179.9 337.8 L180.2 339.8 L180.4 341.3 L180.6 342.5 L180.8 343.4 L180.9 344.1 L181.1 344.6 L181.2 344.9 L181.4 345.0 L181.6 344.9 L181.7 344.4 L181.8 343.8 L182.0 343.1 L182.1 342.4 L182.3 341.9 L182.5 341.4 L182.6 340.8 L182.8 340.3 L183.0 339.9 L183.1 339.6 L183.3 339.4" stroke="#d31f26"/>
<path d="M183.3 339.4 L183.5 339.6 L183.6 339.8 L183.7 340.3 L183.9 340.8 L184.0 341.3 L184.2 341.9 L184.4 342.5 L184.5 343.1 L184.7 343.8 L184.9 344.5 L185.1 345.1 L185.3 345.6 L185.5 345.9 L185.7 346.1 L185.9 346.2 L186.2 346.3 L186.4 346.5 L186.6 346.6 L186.8 346.9 L187.0 347.2 L187.1 347.5 L187.3 347.7 L187.5 348.0 L187.7 348.2 L187.9 348.3 L188.1 348.4 L188.3 348.5 L188.5 348.5 L188.8 348.6 L189.0 348.7 L189.2 348.9 L189.5 349.1 L189.7 349.4 L190.0 349.7 L190.2 349.9 L190.5 350.1 L190.8 350.2 L191.0 350.3 L191.3 350.4 L191.5 350.5 L191.8 350.6 L192.0 350.7 L192.2 350.9 L192.5 351.1 L192.7 351.3 L192.9 351.5 L193.1 351.7 L193.4 352.0" stroke="#8fc232"/>
<path d="M193.4 352.0 L193.7 352.3 L194.1 352.7 L194.4 353.0 L194.8 353.4 L195.1 353.7 L195.3 353.9 L195.4 354.0 L195.5 354.0 L195.4 354.0 L195.4 354.0 L195.4 353.9 L195.3 353.9" stroke="#d31f26"/>
<path d="M195.4 353.9 L195.6 353.2 L195.9 352.2 L196.2 351.0 L196.6 349.7 L197.0 348.2 L197.2 346.7 L197.5 345.0 L197.7 343.0 L197.8 340.8 L198.0 338.7 L198.1 336.8 L198.3 335.1 L198.5 333.7 L198.7 332.4 L198.9 331.2 L199.1 330.3 L199.3 329.5 L199.5 328.9 L199.7 328.6 L199.9 328.6 L200.1 328.7 L200.3 329.0 L200.5 329.3 L200.7 329.5 L200.9 329.7 L201.0 330.0 L201.2 330.3 L201.3 330.5 L201.5 330.7 L201.7 330.7 L201.9 330.5 L202.1 330.1 L202.4 329.7 L202.6 329.1 L202.9 328.7 L203.1 328.3 L203.3 328.0 L203.5 327.6 L203.7 327.2 L203.9 327.0 L204.1 326.9 L204.3 327.1 L204.5 327.5 L204.7 328.1 L204.9 328.9 L205.1 329.8 L205.4 330.9 L205.6 332.1 L205.8 333.6 L206.1 335.3 L206.4 337.2 L206.6 339.1 L206.9 340.8 L207.1 342.1 L207.3 343.1 L207.5 343.9 L207.6 344.5 L207.8 344.9 L207.9 345.2 L208.1 345.3 L208.3 345.2 L208.4 344.8 L208.6 344.3 L208.7 343.7 L208.8 343.1 L209.0 342.6 L209.2 342.2 L209.3 341.7 L209.5 341.3 L209.7 340.9 L209.8 340.6 L210.0 340.5" stroke="#d31f26"/>
<path d="M210.0 340.5 L210.2 340.6 L210.3 340.8 L210.4 341.2 L210.6 341.7 L210.7 342.1 L210.9 342.6 L211.1 343.1 L211.2 343.7 L211.4 344.3 L211.6 344.9 L211.8 345.4 L212.0 345.8 L212.2 346.1 L212.4 346.2 L212.6 346.4 L212.9 346.4 L213.1 346.5 L213.3 346.7 L213.5 346.9 L213.7 347.2 L213.9 347.5 L214.0 347.8 L214.2 348.0 L214.4 348.2 L214.6 348.3 L214.8 348.4 L215.0 348.5 L215.2 348.5 L215.5 348.6 L215.7 348.7 L215.9 348.9 L216.2 349.1 L216.4 349.4 L216.7 349.7 L216.9 349.9 L217.2 350.1 L217.5 350.2 L217.7 350.3 L218.0 350.4 L218.2 350.5 L218.5 350.6 L218.7 350.7 L218.9 350.9 L219.2 351.1 L219.4 351.3 L219.6 351.5 L219.8 351.7 L220.1 352.0" stroke="#8fc232"/>
<path d="M220.1 352.0 L220.4 352.3 L220.8 352.7 L221.1 353.0 L221.5 353.4 L221.8 353.7 L222.0 353.9 L222.1 354.0 L222.2 354.0 L222.1 354.0 L222.1 354.0 L222.1 353.9 L222.1 353.9" stroke="#d31f26"/>
<path d="M222.1 353.9 L222.3 353.2 L222.6 352.2 L222.9 351.0 L223.3 349.7 L223.7 348.2 L223.9 346.7 L224.2 345.0 L224.4 343.0 L224.5 340.8 L224.7 338.7 L224.8 336.8 L225.0 335.1 L225.2 333.7 L225.4 332.4 L225.6 331.2 L225.8 330.3 L226.0 329.5 L226.2 328.9 L226.4 328.6 L226.6 328.6 L226.8 328.7 L227.0 329.0 L227.2 329.3 L227.4 329.5 L227.6 329.7 L227.7 330.0 L227.9 330.3 L228.0 330.5 L228.2 330.7 L228.4 330.7 L228.6 330.5 L228.8 330.1 L229.1 329.7 L229.3 329.1 L229.6 328.7 L229.8 328.3 L230.0 328.0 L230.2 327.6 L230.4 327.2 L230.6 327.0 L230.8 326.9 L231.0 327.1 L231.2 327.5 L231.4 328.1 L231.6 328.9 L231.8 329.8 L232.1 330.9 L232.3 332.1 L232.5 333.6 L232.8 335.3 L233.1 337.2 L233.3 339.1 L233.6 340.8 L233.8 342.1 L234.0 343.1 L234.2 343.9 L234.3 344.5 L234.5 344.9 L234.6 345.2 L234.8 345.3 L235.0 345.2 L235.1 344.8 L235.3 344.3 L235.4 343.7 L235.5 343.1 L235.7 342.6 L235.9 342.2 L236.0 341.7 L236.2 341.3 L236.4 340.9 L236.5 340.6 L236.7 340.5" stroke="#d31f26"/>
<path d="M236.7 340.5 L236.9 340.6 L237.0 340.8 L237.1 341.2 L237.3 341.7 L237.4 342.1 L237.6 342.6 L237.8 343.1 L237.9 343.7 L238.1 344.3 L238.3 344.9 L238.5 345.4 L238.7 345.8 L238.9 346.1 L239.1 346.2 L239.3 346.4 L239.6 346.4 L239.8 346.5 L240.0 346.7 L240.2 346.9 L240.4 347.2 L240.5 347.5 L240.7 347.8 L240.9 348.0 L241.1 348.2 L241.3 348.3 L241.5 348.4 L241.7 348.5 L241.9 348.5 L242.2 348.6 L242.4 348.7 L242.6 348.9 L242.9 349.1 L243.1 349.4 L243.4 349.7 L243.6 349.9 L243.9 350.1 L244.2 350.2 L244.4 350.3 L244.7 350.4 L244.9 350.5 L245.2 350.6 L245.4 350.7 L245.6 350.9 L245.9 351.1 L246.1 351.3 L246.3 351.5 L246.5 351.7 L246.8 352.0" stroke="#8fc232"/>
<path d="M246.8 352.0 L247.1 352.3 L247.5 352.7 L247.8 353.0 L248.2 353.4 L248.5 353.7 L248.7 353.9 L248.8 354.0 L248.9 354.0 L248.8 354.0 L248.8 354.0 L248.8 353.9 L248.8 353.9" stroke="#d31f26"/>
<path d="M248.8 353.9 L249.0 353.2 L249.3 352.2 L249.6 351.1 L250.0 349.8 L250.4 348.3 L250.6 346.6 L250.9 344.7 L251.1 342.5 L251.2 340.0 L251.4 337.6 L251.5 335.4 L251.7 333.5 L251.9 331.9 L252.1 330.4 L252.3 329.1 L252.5 328.0 L252.7 327.1 L252.9 326.4 L253.1 326.1 L253.3 326.1 L253.5 326.3 L253.7 326.6 L253.9 326.9 L254.1 327.1 L254.3 327.4 L254.4 327.7 L254.6 328.0 L254.7 328.3 L254.9 328.5 L255.1 328.5 L255.3 328.3 L255.5 327.8 L255.8 327.3 L256.0 326.7 L256.3 326.2 L256.5 325.8 L256.7 325.4 L256.9 324.9 L257.1 324.6 L257.3 324.3 L257.5 324.2 L257.7 324.4 L257.9 324.9 L258.1 325.6 L258.3 326.4 L258.5 327.5 L258.8 328.7 L259.0 330.1 L259.2 331.7 L259.5 333.7 L259.8 335.9 L260.0 338.0 L260.3 339.9 L260.5 341.4 L260.7 342.6 L260.9 343.5 L261.0 344.1 L261.2 344.6 L261.3 344.9 L261.5 345.1 L261.7 344.9 L261.8 344.5 L261.9 343.9 L262.1 343.2 L262.2 342.5 L262.4 342.0 L262.6 341.5 L262.7 341.0 L262.9 340.5 L263.1 340.0 L263.2 339.7 L263.4 339.6" stroke="#d31f26"/>
<path d="M263.4 339.6 L263.6 339.7 L263.7 340.0 L263.8 340.4 L264.0 340.9 L264.1 341.5 L264.3 342.0 L264.5 342.6 L264.6 343.2 L264.8 343.9 L265.0 344.6 L265.2 345.2 L265.4 345.6 L265.6 345.9 L265.8 346.1 L266.1 346.3 L266.3 346.4 L266.5 346.5 L266.7 346.6 L266.9 346.9 L267.1 347.2 L267.2 347.5 L267.4 347.7 L267.6 348.0 L267.8 348.2 L268.0 348.3 L268.2 348.4 L268.4 348.5 L268.6 348.5 L268.9 348.6 L269.1 348.7 L269.3 348.9 L269.6 349.1 L269.8 349.4 L270.1 349.7 L270.3 349.9 L270.6 350.1 L270.9 350.2 L271.1 350.3 L271.4 350.4 L271.6 350.5 L271.9 350.6 L272.1 350.7 L272.3 350.9 L272.6 351.1 L272.8 351.3 L273.0 351.5 L273.2 351.7 L273.5 352.0" stroke="#8fc232"/>
<path d="M273.5 352.0 L273.8 352.3 L274.2 352.7 L274.5 353.0 L274.9 353.4 L275.2 353.7 L275.4 353.9 L275.5 354.0 L275.6 354.0 L275.5 354.0 L275.5 354.0 L275.5 353.9 L275.4 353.9" stroke="#d31f26"/>
<path d="M275.4 353.9 L275.7 353.2 L276.0 352.3 L276.3 351.1 L276.7 349.8 L277.1 348.3 L277.3 346.6 L277.6 344.6 L277.8 342.3 L277.9 339.8 L278.1 337.2 L278.2 334.9 L278.4 332.9 L278.6 331.2 L278.8 329.7 L279.0 328.3 L279.2 327.1 L279.4 326.2 L279.6 325.5 L279.8 325.2 L280.0 325.1 L280.2 325.3 L280.4 325.7 L280.6 326.0 L280.8 326.2 L281.0 326.5 L281.1 326.8 L281.3 327.2 L281.4 327.5 L281.6 327.7 L281.8 327.7 L282.0 327.4 L282.2 327.0 L282.5 326.4 L282.7 325.8 L283.0 325.3 L283.2 324.8 L283.4 324.4 L283.6 324.0 L283.8 323.6 L284.0 323.3 L284.2 323.2 L284.4 323.4 L284.6 323.9 L284.8 324.6 L285.0 325.5 L285.2 326.6 L285.5 327.9 L285.7 329.3 L285.9 331.1 L286.2 333.1 L286.5 335.4 L286.7 337.6 L287.0 339.6 L287.2 341.2 L287.4 342.4 L287.6 343.3 L287.7 344.0 L287.9 344.5 L288.0 344.8 L288.2 345.0 L288.4 344.8 L288.5 344.4 L288.6 343.8 L288.8 343.0 L288.9 342.3 L289.1 341.8 L289.3 341.3 L289.4 340.7 L289.6 340.2 L289.8 339.7 L289.9 339.4 L290.1 339.3 L290.3 339.4 L290.4 339.7 L290.5 340.1 L290.7 340.7 L290.8 341.2 L291.0 341.8 L291.2 342.4 L291.3 343.0 L291.5 343.8 L291.7 344.4 L291.9 345.1 L292.1 345.6 L292.3 345.9 L292.5 346.1 L292.8 346.2 L293.0 346.3 L293.2 346.5 L293.4 346.6 L293.6 346.9 L293.8 347.2 L293.9 347.4 L294.1 347.7 L294.3 348.0 L294.5 348.2 L294.7 348.3 L294.9 348.4 L295.1 348.5 L295.3 348.5 L295.6 348.6 L295.8 348.7 L296.0 348.9 L296.3 349.1 L296.5 349.4 L296.8 349.7 L297.0 349.9 L297.3 350.1 L297.6 350.2 L297.8 350.3 L298.1 350.4 L298.3 350.5 L298.6 350.6 L298.8 350.7 L299.0 350.9 L299.3 351.1 L299.5 351.3 L299.7 351.5 L299.9 351.7 L300.2 352.0 L300.5 352.3 L300.9 352.7 L301.2 353.0 L301.6 353.4 L301.9 353.7 L302.1 353.9 L302.2 354.0 L302.3 354.0 L302.2 354.0 L302.2 354.0 L302.2 353.9 L302.1 353.9" stroke="#b2b2b2"/>
<path d="M302.2 353.9 L302.4 353.2 L302.7 352.2 L303.0 351.1 L303.4 349.7 L303.8 348.3 L304.1 346.7 L304.3 344.9 L304.5 342.8 L304.6 340.5 L304.8 338.3 L304.9 336.2 L305.1 334.4 L305.3 332.9 L305.5 331.6 L305.7 330.4 L305.9 329.3 L306.1 328.5 L306.3 327.9 L306.5 327.6 L306.7 327.6 L306.9 327.7 L307.1 328.0 L307.3 328.3 L307.5 328.5 L307.7 328.8 L307.8 329.0 L308.0 329.4 L308.1 329.6 L308.3 329.8 L308.5 329.8 L308.7 329.6 L308.9 329.2 L309.2 328.7 L309.4 328.2 L309.7 327.7 L309.9 327.3 L310.1 326.9 L310.3 326.5 L310.5 326.1 L310.7 325.9 L310.9 325.8 L311.1 326.0 L311.3 326.4 L311.5 327.1 L311.7 327.9 L311.9 328.9 L312.2 330.0 L312.4 331.3 L312.6 332.8 L312.9 334.7 L313.2 336.7 L313.4 338.6 L313.7 340.4 L313.9 341.8 L314.1 342.9 L314.3 343.7 L314.4 344.4 L314.6 344.8 L314.7 345.1 L314.9 345.2 L315.1 345.1 L315.2 344.7 L315.3 344.1 L315.5 343.5 L315.6 342.9 L315.8 342.4 L316.0 341.9 L316.1 341.4 L316.3 340.9 L316.5 340.5 L316.6 340.2 L316.8 340.1" stroke="#d31f26"/>
<path d="M316.8 340.1 L317.0 340.2 L317.1 340.5 L317.2 340.9 L317.4 341.4 L317.5 341.9 L317.7 342.4 L317.9 342.9 L318.0 343.5 L318.2 344.1 L318.4 344.7 L318.6 345.3 L318.8 345.7 L319.0 346.0 L319.2 346.2 L319.5 346.3 L319.7 346.4 L319.9 346.5 L320.1 346.7 L320.3 346.9 L320.5 347.2 L320.7 347.5 L320.8 347.7 L321.0 348.0 L321.2 348.2 L321.4 348.3 L321.6 348.4 L321.8 348.5 L322.0 348.5 L322.3 348.6 L322.5 348.7 L322.7 348.9 L323.0 349.1 L323.2 349.4 L323.5 349.7 L323.7 349.9 L324.0 350.1 L324.3 350.2 L324.5 350.3 L324.8 350.4 L325.0 350.5 L325.3 350.6 L325.5 350.7 L325.7 350.9 L326.0 351.1 L326.2 351.3 L326.4 351.5 L326.6 351.7 L326.9 352.0" stroke="#8fc232"/>
<path d="M326.9 352.0 L327.2 352.3 L327.6 352.7 L327.9 353.0 L328.3 353.4 L328.6 353.7 L328.8 353.9 L328.9 354.0 L329.0 354.0 L328.9 354.0 L328.9 354.0 L328.9 353.9 L328.9 353.9" stroke="#d31f26"/>
<path d="M328.9 353.9 L329.1 353.2 L329.4 352.2 L329.7 351.0 L330.1 349.7 L330.5 348.2 L330.8 346.7 L331.0 344.9 L331.2 342.9 L331.3 340.8 L331.5 338.6 L331.6 336.7 L331.8 335.0 L332.0 333.5 L332.2 332.2 L332.4 331.1 L332.6 330.1 L332.8 329.3 L333.0 328.7 L333.2 328.4 L333.4 328.4 L333.6 328.6 L333.8 328.8 L334.0 329.1 L334.2 329.3 L334.4 329.5 L334.5 329.8 L334.7 330.1 L334.8 330.4 L335.0 330.5 L335.2 330.5 L335.4 330.3 L335.6 330.0 L335.9 329.5 L336.1 329.0 L336.4 328.5 L336.6 328.1 L336.8 327.8 L337.0 327.4 L337.2 327.0 L337.4 326.8 L337.6 326.7 L337.8 326.9 L338.0 327.3 L338.2 327.9 L338.4 328.7 L338.6 329.7 L338.9 330.7 L339.1 332.0 L339.3 333.4 L339.6 335.2 L339.9 337.1 L340.1 339.0 L340.4 340.7 L340.6 342.1 L340.8 343.1 L341.0 343.9 L341.1 344.5 L341.3 344.9 L341.4 345.2 L341.6 345.3 L341.8 345.2 L341.9 344.8 L342.1 344.3 L342.2 343.6 L342.3 343.0 L342.5 342.6 L342.7 342.1 L342.8 341.6 L343.0 341.2 L343.2 340.8 L343.3 340.5 L343.5 340.4" stroke="#d31f26"/>
<path d="M343.5 340.4 L343.7 340.5 L343.8 340.8 L343.9 341.2 L344.1 341.6 L344.2 342.1 L344.4 342.6 L344.6 343.1 L344.7 343.6 L344.9 344.2 L345.1 344.8 L345.3 345.4 L345.5 345.8 L345.7 346.1 L345.9 346.2 L346.2 346.3 L346.4 346.4 L346.6 346.5 L346.8 346.7 L347.0 346.9 L347.2 347.2 L347.4 347.5 L347.5 347.8 L347.7 348.0 L347.9 348.2 L348.1 348.3 L348.3 348.4 L348.5 348.5 L348.7 348.5 L349.0 348.6 L349.2 348.7 L349.4 348.9 L349.7 349.1 L349.9 349.4 L350.2 349.7 L350.4 349.9 L350.7 350.1 L351.0 350.2 L351.2 350.3 L351.5 350.4 L351.7 350.5 L352.0 350.6 L352.2 350.7 L352.4 350.9 L352.7 351.1 L352.9 351.3 L353.1 351.5 L353.3 351.7 L353.6 352.0" stroke="#8fc232"/>
<path d="M353.6 352.0 L353.9 352.3 L354.3 352.7 L354.6 353.0 L355.0 353.4 L355.3 353.7 L355.5 353.9 L355.6 354.0 L355.7 354.0 L355.6 354.0 L355.6 354.0 L355.6 353.9 L355.6 353.9" stroke="#d31f26"/>
<path d="M355.6 353.9 L355.8 353.2 L356.1 352.2 L356.4 351.1 L356.8 349.8 L357.2 348.3 L357.4 346.6 L357.7 344.7 L357.9 342.4 L358.0 339.9 L358.2 337.4 L358.3 335.1 L358.5 333.1 L358.7 331.5 L358.9 330.0 L359.1 328.6 L359.3 327.5 L359.5 326.6 L359.7 325.9 L359.9 325.5 L360.1 325.5 L360.3 325.7 L360.5 326.0 L360.7 326.3 L360.9 326.6 L361.1 326.8 L361.2 327.2 L361.4 327.5 L361.5 327.8 L361.7 328.0 L361.9 328.0 L362.1 327.8 L362.3 327.3 L362.6 326.8 L362.8 326.2 L363.1 325.6 L363.3 325.2 L363.5 324.8 L363.7 324.4 L363.9 324.0 L364.1 323.7 L364.3 323.6 L364.5 323.8 L364.7 324.3 L364.9 325.0 L365.1 325.9 L365.3 327.0 L365.6 328.2 L365.8 329.6 L366.0 331.3 L366.3 333.4 L366.6 335.6 L366.8 337.8 L367.1 339.7 L367.3 341.3 L367.5 342.4 L367.7 343.4 L367.8 344.1 L368.0 344.6 L368.1 344.9 L368.3 345.0 L368.5 344.9 L368.6 344.4 L368.7 343.8 L368.9 343.1 L369.0 342.4 L369.2 341.9 L369.4 341.4 L369.5 340.8 L369.7 340.3 L369.9 339.8 L370.0 339.5 L370.2 339.4" stroke="#d31f26"/>
<path d="M370.2 339.4 L370.4 339.5 L370.5 339.8 L370.6 340.2 L370.8 340.8 L370.9 341.3 L371.1 341.9 L371.3 342.4 L371.4 343.1 L371.6 343.8 L371.8 344.5 L372.0 345.1 L372.2 345.6 L372.4 345.9 L372.6 346.1 L372.8 346.2 L373.1 346.3 L373.3 346.5 L373.5 346.6 L373.7 346.9 L373.9 347.2 L374.1 347.5 L374.2 347.7 L374.4 348.0 L374.6 348.2 L374.8 348.3 L375.0 348.4 L375.2 348.5 L375.4 348.5 L375.7 348.6 L375.9 348.7 L376.1 348.9 L376.4 349.1 L376.6 349.4 L376.9 349.7 L377.1 349.9 L377.4 350.1 L377.7 350.2 L377.9 350.3 L378.2 350.4 L378.4 350.5 L378.7 350.6 L378.9 350.7 L379.1 350.9 L379.4 351.1 L379.6 351.3 L379.8 351.5 L380.0 351.7 L380.3 352.0" stroke="#8fc232"/>
<path d="M380.3 352.0 L380.6 352.3 L381.0 352.7 L381.3 353.0 L381.7 353.4 L382.0 353.7 L382.2 353.9 L382.3 354.0 L382.4 354.0 L382.3 354.0 L382.3 354.0 L382.3 353.9 L382.2 353.9" stroke="#d31f26"/>
<path d="M382.2 353.9 L382.5 353.2 L382.8 352.3 L383.1 351.1 L383.5 349.8 L383.9 348.3 L384.1 346.6 L384.4 344.6 L384.6 342.2 L384.7 339.6 L384.9 337.0 L385.0 334.6 L385.2 332.6 L385.4 330.9 L385.6 329.3 L385.8 327.9 L386.0 326.7 L386.2 325.8 L386.4 325.1 L386.6 324.7 L386.8 324.7 L387.0 324.9 L387.2 325.2 L387.4 325.5 L387.6 325.8 L387.8 326.1 L387.9 326.4 L388.1 326.8 L388.2 327.1 L388.4 327.3 L388.6 327.3 L388.8 327.0 L389.0 326.6 L389.3 326.0 L389.5 325.4 L389.8 324.8 L390.0 324.4 L390.2 323.9 L390.4 323.5 L390.6 323.1 L390.8 322.8 L391.0 322.7 L391.2 322.9 L391.4 323.4 L391.6 324.1 L391.8 325.1 L392.0 326.2 L392.3 327.5 L392.5 329.0 L392.7 330.7 L393.0 332.8 L393.3 335.1 L393.5 337.4 L393.8 339.4 L394.0 341.1 L394.2 342.3 L394.4 343.2 L394.5 343.9 L394.7 344.5 L394.8 344.8 L395.0 344.9 L395.2 344.8 L395.3 344.3 L395.4 343.7 L395.6 343.0 L395.7 342.2 L395.9 341.7 L396.1 341.1 L396.2 340.6 L396.4 340.0 L396.6 339.6 L396.7 339.2 L396.9 339.1" stroke="#d31f26"/>
<path d="M396.9 339.1 L397.1 339.2 L397.2 339.5 L397.3 340.0 L397.5 340.5 L397.6 341.1 L397.8 341.7 L398.0 342.3 L398.1 343.0 L398.3 343.7 L398.5 344.4 L398.7 345.0 L398.9 345.5 L399.1 345.9 L399.3 346.1 L399.6 346.2 L399.8 346.3 L400.0 346.4 L400.2 346.6 L400.4 346.9 L400.6 347.1 L400.8 347.4 L400.9 347.7 L401.1 348.0 L401.3 348.2 L401.5 348.3 L401.7 348.4 L401.9 348.5 L402.1 348.5 L402.4 348.6 L402.6 348.7 L402.8 348.9 L403.1 349.1 L403.3 349.4 L403.6 349.7 L403.8 349.9 L404.1 350.1 L404.4 350.2 L404.6 350.3 L404.9 350.4 L405.1 350.5 L405.4 350.6 L405.6 350.7 L405.8 350.9 L406.1 351.1 L406.3 351.3 L406.5 351.5 L406.7 351.7 L407.0 352.0" stroke="#8fc232"/>
<path d="M407.0 352.0 L407.3 352.3 L407.7 352.7 L408.0 353.0 L408.4 353.4 L408.7 353.7 L408.9 353.9 L409.0 354.0 L409.1 354.0 L409.0 354.0 L409.0 354.0 L409.0 353.9 L408.9 353.9" stroke="#d31f26"/>
<path d="M408.9 353.9 L409.2 353.2 L409.5 352.2 L409.8 351.1 L410.2 349.7 L410.6 348.3 L410.8 346.7 L411.1 344.9 L411.3 342.8 L411.4 340.5 L411.6 338.3 L411.7 336.2 L411.9 334.4 L412.1 332.9 L412.3 331.6 L412.5 330.4 L412.7 329.3 L412.9 328.5 L413.1 327.9 L413.3 327.6 L413.5 327.6 L413.7 327.7 L413.9 328.0 L414.1 328.3 L414.3 328.5 L414.5 328.8 L414.6 329.0 L414.8 329.4 L414.9 329.6 L415.1 329.8 L415.3 329.8 L415.5 329.6 L415.7 329.2 L416.0 328.7 L416.2 328.2 L416.5 327.7 L416.7 327.3 L416.9 326.9 L417.1 326.5 L417.3 326.1 L417.5 325.9 L417.7 325.8 L417.9 326.0 L418.1 326.4 L418.3 327.1 L418.5 327.9 L418.7 328.9 L419.0 330.0 L419.2 331.3 L419.4 332.8 L419.7 334.7 L420.0 336.7 L420.2 338.6 L420.5 340.4 L420.7 341.8 L420.9 342.9 L421.1 343.7 L421.2 344.4 L421.4 344.8 L421.5 345.1 L421.7 345.2 L421.9 345.1 L422.0 344.7 L422.1 344.1 L422.3 343.5 L422.4 342.9 L422.6 342.4 L422.8 341.9 L422.9 341.4 L423.1 340.9 L423.3 340.5 L423.4 340.2 L423.6 340.1" stroke="#d31f26"/>
<path d="M423.6 340.1 L423.8 340.2 L423.9 340.5 L424.0 340.9 L424.2 341.4 L424.3 341.9 L424.5 342.4 L424.7 342.9 L424.8 343.5 L425.0 344.1 L425.2 344.7 L425.4 345.3 L425.6 345.7 L425.8 346.0 L426.0 346.2 L426.2 346.3 L426.5 346.4 L426.7 346.5 L426.9 346.7 L427.1 346.9 L427.3 347.2 L427.4 347.5 L427.6 347.7 L427.8 348.0 L428.0 348.2 L428.2 348.3 L428.4 348.4 L428.6 348.5 L428.8 348.5 L429.1 348.6 L429.3 348.7 L429.5 348.9 L429.8 349.1 L430.0 349.4 L430.3 349.7 L430.5 349.9 L430.8 350.1 L431.1 350.2 L431.3 350.3 L431.6 350.4 L431.8 350.5 L432.1 350.6 L432.3 350.7 L432.5 350.9 L432.8 351.1 L433.0 351.3 L433.2 351.5 L433.4 351.7 L433.7 352.0" stroke="#8fc232"/>
<path d="M433.7 352.0 L434.0 352.3 L434.4 352.7 L434.7 353.0 L435.1 353.4 L435.4 353.7 L435.6 353.9 L435.7 354.0 L435.8 354.0 L435.7 354.0 L435.7 354.0 L435.7 353.9 L435.6 353.9" stroke="#d31f26"/>
<path d="M435.7 353.9 L435.9 353.2 L436.2 352.2 L436.5 351.1 L436.9 349.7 L437.3 348.3 L437.6 346.7 L437.8 344.9 L438.0 342.8 L438.1 340.5 L438.3 338.3 L438.4 336.2 L438.6 334.4 L438.8 332.9 L439.0 331.6 L439.2 330.4 L439.4 329.3 L439.6 328.5 L439.8 327.9 L440.0 327.6 L440.2 327.6 L440.4 327.7 L440.6 328.0 L440.8 328.3 L441.0 328.5 L441.2 328.8 L441.3 329.0 L441.5 329.4 L441.6 329.6 L441.8 329.8 L442.0 329.8 L442.2 329.6 L442.4 329.2 L442.7 328.7 L442.9 328.2 L443.2 327.7 L443.4 327.3 L443.6 326.9 L443.8 326.5 L444.0 326.1 L444.2 325.9 L444.4 325.8 L444.6 326.0 L444.8 326.4 L445.0 327.1 L445.2 327.9 L445.4 328.9 L445.7 330.0 L445.9 331.3 L446.1 332.8 L446.4 334.7 L446.7 336.7 L446.9 338.6 L447.2 340.4 L447.4 341.8 L447.6 342.9 L447.8 343.7 L447.9 344.4 L448.1 344.8 L448.2 345.1 L448.4 345.2 L448.6 345.1 L448.7 344.7 L448.9 344.1 L449.0 343.5 L449.1 342.9 L449.3 342.4 L449.5 341.9 L449.6 341.4 L449.8 340.9 L450.0 340.5 L450.1 340.2 L450.3 340.1" stroke="#d31f26"/>
<path d="M450.3 340.1 L450.5 340.2 L450.6 340.5 L450.7 340.9 L450.9 341.4 L451.0 341.9 L451.2 342.4 L451.4 342.9 L451.5 343.5 L451.7 344.1 L451.9 344.7 L452.1 345.3 L452.3 345.7 L452.5 346.0 L452.7 346.2 L453.0 346.3 L453.2 346.4 L453.4 346.5 L453.6 346.7 L453.8 346.9 L454.0 347.2 L454.2 347.5 L454.3 347.7 L454.5 348.0 L454.7 348.2 L454.9 348.3 L455.1 348.4 L455.3 348.5 L455.5 348.5 L455.8 348.6 L456.0 348.7 L456.2 348.9 L456.5 349.1 L456.7 349.4 L457.0 349.7 L457.2 349.9 L457.5 350.1 L457.8 350.2 L458.0 350.3 L458.3 350.4 L458.5 350.5 L458.8 350.6 L459.0 350.7 L459.2 350.9 L459.5 351.1 L459.7 351.3 L459.9 351.5 L460.1 351.7 L460.4 352.0" stroke="#8fc232"/>
<path d="M460.4 352.0 L460.7 352.3 L461.1 352.7 L461.4 353.0 L461.8 353.4 L462.1 353.7 L462.3 353.9 L462.4 354.0 L462.5 354.0 L462.4 354.0 L462.4 354.0 L462.4 353.9 L462.4 353.9" stroke="#d31f26"/>
<path d="M462.3 353.9 L462.6 353.2 L462.9 352.2 L463.2 351.1 L463.6 349.8 L464.0 348.3 L464.2 346.6 L464.5 344.7 L464.7 342.4 L464.8 339.9 L465.0 337.4 L465.1 335.1 L465.3 333.1 L465.5 331.5 L465.7 330.0 L465.9 328.6 L466.1 327.5 L466.3 326.6 L466.5 325.9 L466.7 325.5 L466.9 325.5 L467.1 325.7 L467.3 326.0 L467.5 326.3 L467.7 326.6 L467.9 326.8 L468.0 327.2 L468.2 327.5 L468.3 327.8 L468.5 328.0 L468.7 328.0 L468.9 327.8 L469.1 327.3 L469.4 326.8 L469.6 326.2 L469.9 325.6 L470.1 325.2 L470.3 324.8 L470.5 324.4 L470.7 324.0 L470.9 323.7 L471.1 323.6 L471.3 323.8 L471.5 324.3 L471.7 325.0 L471.9 325.9 L472.1 327.0 L472.4 328.2 L472.6 329.6 L472.8 331.3 L473.1 333.4 L473.4 335.6 L473.6 337.8 L473.9 339.7 L474.1 341.3 L474.3 342.4 L474.5 343.4 L474.6 344.1 L474.8 344.6 L474.9 344.9 L475.1 345.0 L475.3 344.9 L475.4 344.4 L475.5 343.8 L475.7 343.1 L475.8 342.4 L476.0 341.9 L476.2 341.4 L476.3 340.8 L476.5 340.3 L476.7 339.8 L476.8 339.5 L477.0 339.4" stroke="#d31f26"/>
<path d="M477.0 339.4 L477.2 339.5 L477.3 339.8 L477.4 340.2 L477.6 340.8 L477.7 341.3 L477.9 341.9 L478.1 342.4 L478.2 343.1 L478.4 343.8 L478.6 344.5 L478.8 345.1 L479.0 345.6 L479.2 345.9 L479.4 346.1 L479.6 346.2 L479.9 346.3 L480.1 346.5 L480.3 346.6 L480.5 346.9 L480.7 347.2 L480.8 347.5 L481.0 347.7 L481.2 348.0 L481.4 348.2 L481.6 348.3 L481.8 348.4 L482.0 348.5 L482.2 348.5 L482.5 348.6 L482.7 348.7 L482.9 348.9 L483.2 349.1 L483.4 349.4 L483.7 349.7 L483.9 349.9 L484.2 350.1 L484.5 350.2 L484.7 350.3 L485.0 350.4 L485.2 350.5 L485.5 350.6 L485.7 350.7 L485.9 350.9 L486.2 351.1 L486.4 351.3 L486.6 351.5 L486.8 351.7 L487.1 352.0" stroke="#8fc232"/>
<path d="M487.1 352.0 L487.4 352.3 L487.8 352.7 L488.1 353.0 L488.5 353.4 L488.8 353.7 L489.0 353.9 L489.1 354.0 L489.2 354.0 L489.1 354.0 L489.1 354.0 L489.1 353.9 L489.0 353.9" stroke="#d31f26"/>
<path d="M489.1 353.9 L489.3 353.2 L489.6 352.2 L489.9 351.1 L490.3 349.8 L490.7 348.3 L490.9 346.6 L491.2 344.7 L491.4 342.4 L491.5 339.9 L491.7 337.4 L491.8 335.1 L492.0 333.1 L492.2 331.5 L492.4 330.0 L492.6 328.6 L492.8 327.5 L493.0 326.6 L493.2 325.9 L493.4 325.5 L493.6 325.5 L493.8 325.7 L494.0 326.0 L494.2 326.3 L494.4 326.6 L494.6 326.8 L494.7 327.2 L494.9 327.5 L495.0 327.8 L495.2 328.0 L495.4 328.0 L495.6 327.8 L495.8 327.3 L496.1 326.8 L496.3 326.2 L496.6 325.6 L496.8 325.2 L497.0 324.8 L497.2 324.4 L497.4 324.0 L497.6 323.7 L497.8 323.6 L498.0 323.8 L498.2 324.3 L498.4 325.0 L498.6 325.9 L498.8 327.0 L499.1 328.2 L499.3 329.6 L499.5 331.3 L499.8 333.4 L500.1 335.6 L500.3 337.8 L500.6 339.7 L500.8 341.3 L501.0 342.4 L501.2 343.4 L501.3 344.1 L501.5 344.6 L501.6 344.9 L501.8 345.0 L502.0 344.9 L502.1 344.4 L502.2 343.8 L502.4 343.1 L502.5 342.4 L502.7 341.9 L502.9 341.4 L503.0 340.8 L503.2 340.3 L503.4 339.8 L503.5 339.5 L503.7 339.4" stroke="#d31f26"/>
<path d="M503.7 339.4 L503.9 339.5 L504.0 339.8 L504.1 340.2 L504.3 340.8 L504.4 341.3 L504.6 341.9 L504.8 342.4 L504.9 343.1 L505.1 343.8 L505.3 344.5 L505.5 345.1 L505.7 345.6 L505.9 345.9 L506.1 346.1 L506.3 346.2 L506.6 346.3 L506.8 346.5 L507.0 346.6 L507.2 346.9 L507.4 347.2 L507.6 347.5 L507.7 347.7 L507.9 348.0 L508.1 348.2 L508.3 348.3 L508.5 348.4 L508.7 348.5 L508.9 348.5 L509.2 348.6 L509.4 348.7 L509.6 348.9 L509.9 349.1 L510.1 349.4 L510.4 349.7 L510.6 349.9 L510.9 350.1 L511.2 350.2 L511.4 350.3 L511.7 350.4 L511.9 350.5 L512.2 350.6 L512.4 350.7 L512.6 350.8" stroke="#8fc232"/>
  </g>

  <!-- scrubber -->
  <rect x="133.8" y="400.3" width="391.4" height="21.5" rx="1.5" fill="#f2f2f2"/>
  <rect x="145" y="401.6" width="369" height="18.9" fill="#3b3b3b"/>
  <path d="M138 407.6v7.4M140.9 407.6v7.4M518.2 407.6v7.4M521.1 407.6v7.4" stroke="#222" stroke-width="1.3"/>
  <path d="M169.3 401.6v18.9" stroke="#2fc4b2" stroke-width="1.1"/>
  <path d="M258.2 401.6v18.9" stroke="#e8962a" stroke-width="1.1"/>

  <!-- footer icons -->
  <g fill="#f2f2f2">
    <path d="M122.5 449h2.6l1-1.6h4.2l1 1.6h2.4v7.6h-11.2z"/>
    <circle cx="128.1" cy="452.6" r="2.9" fill="#454545"/>
    <circle cx="128.1" cy="452.6" r="1.9"/>
    <rect x="628" y="447.8" width="7.8" height="7.8" rx="0.8"/>
    <path d="M635.4 451.7l4.2-3.4v6.8z"/>
  </g>
  <!-- Zero Pa / Normalize icons -->
  <g stroke="#8a8a8a" fill="none" stroke-width="1.5">
    <path d="M544.2 192h11"/>
    <path d="M549.7 181v6"/>
    <path d="M545.9 185.8h7.6l-3.8 4.2z" fill="#8a8a8a" stroke="none"/>
    <path d="M621 183.6h11.4M621 190.2h3.2c3 0 3.4-1.4 3.4-3.4v-3"/>
  </g>
</svg>
<!-- tooltip -->
<div class="abs" style="left:246px;top:163px;width:49px;height:56px;box-sizing:border-box;border:1px solid #3b3b3b;border-radius:2.5px;background:rgba(14,14,14,0.86);overflow:hidden;">
  <div class="abs" style="left:0;top:36px;width:49px;height:20px;background:#2f2f2f;"></div>
</div>
<div class="t" style="left:250.5px;width:40px;text-align:center;top:169.6px;font-size:8px;color:#d0d0d0;">iFR</div>
<div class="t" style="left:250.5px;width:40px;text-align:center;top:184.2px;font-size:15px;color:#33c2b2;letter-spacing:0.8px;text-indent:0.8px;">0.84</div>

<svg width="800" height="470" viewBox="0 0 800 470">
  <path d="M247 181L239.4 187L247 193" fill="#0e0e0e" stroke="#3b3b3b" stroke-width="1"/>
  <path d="M246.6 181.9V192.1" stroke="#0e0e0e" stroke-width="1.4"/>
  <path d="M267.9 206.7l5.2 5.2M273.1 206.7l-5.2 5.2" stroke="#f4f4f4" stroke-width="1.1"/>
</svg>
<div class="t" style="left:168px;width:6.7px;text-align:center;top:264.4px;font-size:6px;font-weight:bold;color:#0a5a50;">0</div>
<div class="t" style="left:256.5px;width:6.7px;text-align:center;top:264.3px;font-size:6px;font-weight:bold;color:#b04a10;">1</div>
</body>
</html>
